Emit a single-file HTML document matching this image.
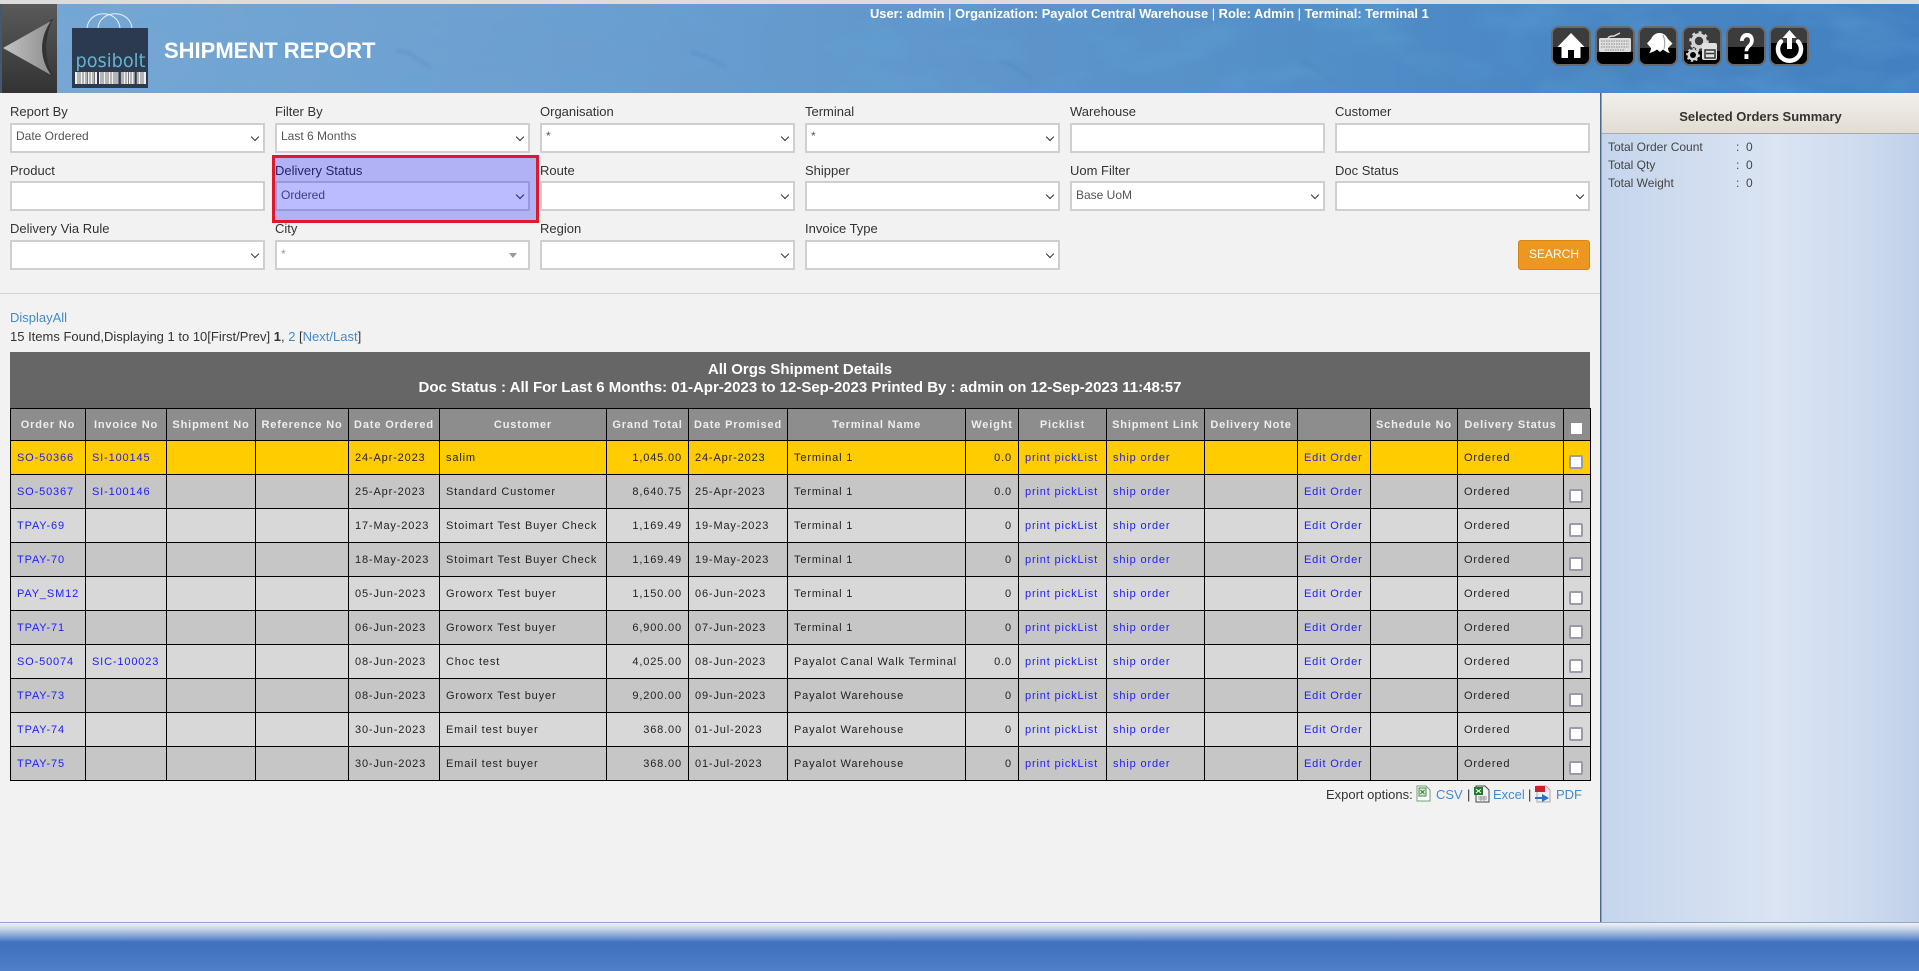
<!DOCTYPE html>
<html><head><meta charset="utf-8"><title>Shipment Report</title>
<style>
*{box-sizing:border-box}
html,body{margin:0;padding:0;width:1919px;height:971px;overflow:hidden;background:#f2f2f2;font-family:"Liberation Sans",Arial,sans-serif;color:#333}
.a{position:absolute}
#top{left:0;top:0;width:1919px;height:4px;background:#dcdcdc}
#hdr{left:0;top:4px;width:1919px;height:89px;background:linear-gradient(90deg,#78a8d4 0%,#6c9fd0 30%,#5f96cb 50%,#5590c8 65%,#4a87c4 80%,#4380c1 100%);overflow:hidden}
.lb{position:absolute;font-size:13px;line-height:16px;color:#333;white-space:nowrap}
.in{position:absolute;width:255px;height:30px;background:#fff;border:2px solid #cfcfcf;font-size:12px;color:#555}
.in span{position:absolute;left:4px;top:4px;line-height:16px;white-space:nowrap}
.in.t span{top:3px}
.in i{position:absolute;left:240px;top:9px;width:6px;height:6px;border-right:1.5px solid #333;border-bottom:1.5px solid #333;transform:rotate(45deg)}
#tbl{position:absolute;left:10px;top:408px;border-collapse:collapse;table-layout:fixed;width:1580px;font-size:11px;letter-spacing:.85px;color:#222}
#tbl td,#tbl th{border:1px solid #000;padding:0 6px;height:34px;white-space:nowrap;overflow:hidden;text-align:left;font-weight:normal}
#tbl th{background:#8d8d8d;color:#eee;font-weight:bold;text-align:center;height:32px;padding:0 2px}
#tbl td.r{text-align:right}
#tbl tr.y td{background:#ffcc00}
#tbl tr.o td{background:#c6c6c6}
#tbl tr.e td{background:#d8d8d8}
#tbl a{color:#2020f5;text-decoration:none}
#tbl td.c{padding:0}
.cb{display:block;width:14px;height:14px;margin:0 auto;background:#fff;border:2px solid #9a9aa8;border-radius:2px;position:relative;top:4px;left:-1px}
.lk{color:#428bca;text-decoration:none}
</style></head><body>
<div class="a" id="top"></div>
<div class="a" id="hdr">
<svg class="a" style="left:0;top:0" width="1919" height="89" viewBox="0 0 1919 89">
<defs><filter id="tx" x="0" y="0" width="100%" height="100%"><feTurbulence type="fractalNoise" baseFrequency="0.012 0.03" numOctaves="3" seed="7"/><feColorMatrix values="0 0 0 0 0.12  0 0 0 0 0.38  0 0 0 0 0.68  1.6 0 0 0 -0.72"/></filter><filter id="bl"><feGaussianBlur stdDeviation="1.600"/></filter></defs>
<rect width="1919" height="89" filter="url(#tx)" opacity=".55"/>
<g fill="none" stroke="#3f7fb9" stroke-width="3" opacity=".25" filter="url(#bl)"><path d="M396 46l12 3 22 14M690 48l12 3 24 12M1000 58l12 3 20 14M1300 58l10 3 22 16"/></g>
</svg>
</div>
<!-- back -->
<svg class="a" style="left:0;top:4px" width="57" height="89" viewBox="0 0 57 89">
<defs><linearGradient id="bk" x1="0" y1="0" x2="0" y2="1"><stop offset="0" stop-color="#5a5a5a"/><stop offset="1" stop-color="#333"/></linearGradient><linearGradient id="ar" x1="0" y1="0" x2="1" y2="0"><stop offset="0" stop-color="#c4c4c4"/><stop offset="1" stop-color="#8e8e8e"/></linearGradient></defs>
<rect width="57" height="89" fill="url(#bk)"/><rect width="2" height="89" fill="#44596e"/>
<path d="M53 15Q47 26 46 44Q47 62 53 71L50 72Q43 60 42 44Q43 28 50 16Z" fill="#333"/>
<path d="M3 44L51 17Q42 30 42 44Q42 58 51 71Z" fill="url(#ar)"/>
</svg>
<!-- logo -->
<svg class="a" style="left:72px;top:10px" width="77" height="79" viewBox="0 0 77 79">
<g fill="none" stroke="#e6eef6" stroke-width="1"><path d="M15 18C17 -1 46 -1 48 18"/><path d="M26 18C28 -1 58 -1 60 18"/></g>
<rect y="18" width="76" height="60" fill="#2c3a4f"/>
<text x="3.500" y="57" font-family="'DejaVu Sans',sans-serif" font-size="19" fill="#64b3d0" textLength="70" lengthAdjust="spacingAndGlyphs">posibolt</text>
<rect x="3" y="62" width="71" height="12" fill="#f0f0f0"/>
<path d="M6 62v12M8 62v12M11 62v12M14 62v12M15.500 62v12M18 62v12M21 62v12M22.500 62v12M29 62v12M31 62v12M34 62v12M36 62v12M39 62v12M42 62v12M44 62v12M46 62v12M49 62v12M51 62v12M54 62v12M56.500 62v12M59 62v12M62 62v12M66 62v12M69 62v12M71 62v12" stroke="#777" stroke-width="1"/>
<path d="M26 62v12M47.700 62v12M63.800 62v12" stroke="#2c3a4f" stroke-width="2"/>
</svg>
<div class="a" style="left:164px;top:38px;font-size:22px;line-height:26px;font-weight:bold;color:#fff;white-space:nowrap">SHIPMENT REPORT</div>
<div class="a" style="left:870px;top:6px;font-size:12.9px;line-height:16px;font-weight:bold;color:#fff;white-space:nowrap">User: admin <span style="font-weight:normal">|</span> Organization: Payalot Central Warehouse <span style="font-weight:normal">|</span> Role: Admin <span style="font-weight:normal">|</span> Terminal: Terminal 1</div>
<!-- icon buttons -->
<svg class="a" style="left:1551px;top:26px" width="260" height="41" viewBox="0 0 260 41">
<defs>
<g id="btn"><rect x="1" y="1" width="38" height="38" rx="7" fill="#000" stroke="#6a6a6a" stroke-width="2"/></g>
<g id="gear"><circle r="5" fill="none" stroke="#d4d4d4" stroke-width="3"/><circle r="7" fill="none" stroke="#d4d4d4" stroke-width="2.200" stroke-dasharray="2.500 2.900"/></g>
</defs>
<use href="#btn" x="0"/><use href="#btn" x="44"/><use href="#btn" x="87"/><use href="#btn" x="131"/><use href="#btn" x="175"/><use href="#btn" x="218"/>
<path d="M2 21V8a6 6 0 0 1 6-6H32a6 6 0 0 1 6 6V21Z" fill="#3c3c3c"/>
<path transform="translate(44 0)" d="M2 26V8a6 6 0 0 1 6-6H32a6 6 0 0 1 6 6V26Z" fill="#3c3c3c"/>
<path transform="translate(87 0)" d="M2 22V8a6 6 0 0 1 6-6H32a6 6 0 0 1 6 6V22Z" fill="#3c3c3c"/>
<path transform="translate(131 0)" d="M2 25V8a6 6 0 0 1 6-6H32a6 6 0 0 1 6 6V25Z" fill="#3c3c3c"/>
<path transform="translate(175 0)" d="M2 21V8a6 6 0 0 1 6-6H32a6 6 0 0 1 6 6V21Z" fill="#3c3c3c"/>
<path transform="translate(218 0)" d="M2 17V8a6 6 0 0 1 6-6H32a6 6 0 0 1 6 6V17Z" fill="#3c3c3c"/>
<!-- home -->
<path d="M20 7L33.500 21H29.500V32H23V24H17V32H10.500V21H6.500Z" fill="#fff"/>
<!-- keyboard -->
<g transform="translate(44 0)"><path d="M13 12Q14 10 19 10L25 7" fill="none" stroke="#ddd" stroke-width="1.500"/><rect x="4" y="12" width="32" height="14" rx="1.500" fill="#ddd"/>
<path d="M6 15h28M6 18h28M6 21h28M10 24h20" stroke="#8a8a8a" stroke-width="1" stroke-dasharray="1.500 1"/></g>
<!-- third -->
<g transform="translate(87 0)"><path d="M21.500 7C26 7 28.500 10 30 13L34.500 17.500L30 22C30 24 31 26 32 27C29 26.500 27 25 25 23.500L22 26L19 23.500C17 25 14 26.500 11 27C12 26 13 24 13 22L9 17.500L13 13C14.500 10 17 7 21.500 7Z" fill="#fff"/><path d="M25 9Q28 16 26 23" stroke="#999" stroke-width="1" fill="none"/></g>
<!-- gears + floppy -->
<g transform="translate(131 0)"><use href="#gear" transform="translate(17 15) scale(1.200)"/><use href="#gear" transform="translate(11 29) scale(.85)"/><rect x="20" y="17" width="15" height="17" rx="2" fill="#e0e0e0"/><rect x="23" y="24" width="10" height="8" fill="none" stroke="#333" stroke-width="1.500"/><path d="M24 27.500h8" stroke="#333" stroke-width="1.500"/></g>
<!-- question -->
<text transform="translate(196 33) scale(.74 1)" text-anchor="middle" font-family="'Liberation Sans',sans-serif" font-weight="bold" font-size="37" fill="#fff">?</text>
<!-- power -->
<g transform="translate(218 0)"><path d="M12 15.500A11.500 11.500 0 1 0 29 15.500" fill="none" stroke="#fff" stroke-width="4.500" stroke-linecap="round"/><path d="M20.500 4L27.500 12H23V23H18V12H13.500Z" fill="#fff"/></g>
</svg>
<!-- form -->
<div class="lb" style="left:10px;top:104px">Report By</div>
<div class="lb" style="left:275px;top:104px">Filter By</div>
<div class="lb" style="left:540px;top:104px">Organisation</div>
<div class="lb" style="left:805px;top:104px">Terminal</div>
<div class="lb" style="left:1070px;top:104px">Warehouse</div>
<div class="lb" style="left:1335px;top:104px">Customer</div>
<div class="in t" style="left:10px;top:123px"><span>Date Ordered</span><i></i></div>
<div class="in t" style="left:275px;top:123px"><span>Last 6 Months</span><i></i></div>
<div class="in t" style="left:540px;top:123px"><span>*</span><i></i></div>
<div class="in t" style="left:805px;top:123px"><span>*</span><i></i></div>
<div class="in" style="left:1070px;top:123px"></div>
<div class="in" style="left:1335px;top:123px"></div>
<div class="lb" style="left:10px;top:163px">Product</div>
<div class="lb" style="left:275px;top:163px">Delivery Status</div>
<div class="lb" style="left:540px;top:163px">Route</div>
<div class="lb" style="left:805px;top:163px">Shipper</div>
<div class="lb" style="left:1070px;top:163px">Uom Filter</div>
<div class="lb" style="left:1335px;top:163px">Doc Status</div>
<div class="in" style="left:10px;top:181px"></div>
<div class="in" style="left:275px;top:181px"><span>Ordered</span><i></i></div>
<div class="in" style="left:540px;top:181px"><i></i></div>
<div class="in" style="left:805px;top:181px"><i></i></div>
<div class="in" style="left:1070px;top:181px"><span>Base UoM</span><i></i></div>
<div class="in" style="left:1335px;top:181px"><i></i></div>
<div class="lb" style="left:10px;top:221px">Delivery Via Rule</div>
<div class="lb" style="left:275px;top:221px">City</div>
<div class="lb" style="left:540px;top:221px">Region</div>
<div class="lb" style="left:805px;top:221px">Invoice Type</div>
<div class="in" style="left:10px;top:240px"><i></i></div>
<div class="in" style="left:275px;top:240px;color:#999"><span>*</span><b class="a" style="left:232px;top:11px;width:0;height:0;border-left:4px solid transparent;border-right:4px solid transparent;border-top:5px solid #999"></b></div>
<div class="in" style="left:540px;top:240px"><i></i></div>
<div class="in" style="left:805px;top:240px"><i></i></div>
<div class="a" style="left:1518px;top:240px;width:72px;height:30px;background:#ec971f;border:1px solid #d58512;border-radius:3px;color:#fff;font-size:12px;line-height:26px;text-align:center">SEARCH</div>
<!-- highlight -->
<div class="a" style="left:272px;top:155px;width:267px;height:68px;border:3px solid #e0182d;background:rgba(0,0,255,.267)"></div>
<div class="a" style="left:0;top:293px;width:1600px;height:1px;background:#d4d4d4"></div>
<!-- paging -->
<div class="a" style="left:10px;top:310px;font-size:13px;line-height:16px;white-space:nowrap"><a class="lk">DisplayAll</a></div>
<div class="a" style="left:10px;top:329px;font-size:13px;line-height:16px;white-space:nowrap;color:#333">15 Items Found,Displaying 1 to 10[First/Prev] <b>1</b>, <a class="lk">2</a> [<a class="lk">Next/Last</a>]</div>
<!-- table -->
<div class="a" style="left:10px;top:352px;width:1580px;height:57px;background:#666;color:#fff;font-weight:bold;font-size:15px;line-height:18px;text-align:center;padding-top:9px;border-bottom:1px solid #000">All Orgs Shipment Details<br>Doc Status : All For Last 6 Months: 01-Apr-2023 to 12-Sep-2023 Printed By : admin on 12-Sep-2023 11:48:57</div>
<table id="tbl"><colgroup><col style="width:75px"><col style="width:81px"><col style="width:89px"><col style="width:93px"><col style="width:91px"><col style="width:167px"><col style="width:82px"><col style="width:99px"><col style="width:178px"><col style="width:53px"><col style="width:88px"><col style="width:98px"><col style="width:93px"><col style="width:73px"><col style="width:87px"><col style="width:106px"><col style="width:27px"></colgroup>
<tr><th>Order No</th><th>Invoice No</th><th>Shipment No</th><th>Reference No</th><th>Date Ordered</th><th>Customer</th><th>Grand Total</th><th>Date Promised</th><th>Terminal Name</th><th>Weight</th><th>Picklist</th><th>Shipment Link</th><th>Delivery Note</th><th></th><th>Schedule No</th><th>Delivery Status</th><th class="c"><span class="cb" style="width:11px;height:11px;border:0;border-radius:0;top:4px"></span></th></tr>
<tr class="y"><td><a>SO-50366</a></td><td><a>SI-100145</a></td><td></td><td></td><td>24-Apr-2023</td><td>salim</td><td class="r">1,045.00</td><td>24-Apr-2023</td><td>Terminal 1</td><td class="r">0.0</td><td><a>print pickList</a></td><td><a>ship order</a></td><td></td><td><a>Edit Order</a></td><td></td><td>Ordered</td><td class="c"><span class="cb"></span></td></tr>
<tr class="o"><td><a>SO-50367</a></td><td><a>SI-100146</a></td><td></td><td></td><td>25-Apr-2023</td><td>Standard Customer</td><td class="r">8,640.75</td><td>25-Apr-2023</td><td>Terminal 1</td><td class="r">0.0</td><td><a>print pickList</a></td><td><a>ship order</a></td><td></td><td><a>Edit Order</a></td><td></td><td>Ordered</td><td class="c"><span class="cb"></span></td></tr>
<tr class="e"><td><a>TPAY-69</a></td><td></td><td></td><td></td><td>17-May-2023</td><td>Stoimart Test Buyer Check</td><td class="r">1,169.49</td><td>19-May-2023</td><td>Terminal 1</td><td class="r">0</td><td><a>print pickList</a></td><td><a>ship order</a></td><td></td><td><a>Edit Order</a></td><td></td><td>Ordered</td><td class="c"><span class="cb"></span></td></tr>
<tr class="o"><td><a>TPAY-70</a></td><td></td><td></td><td></td><td>18-May-2023</td><td>Stoimart Test Buyer Check</td><td class="r">1,169.49</td><td>19-May-2023</td><td>Terminal 1</td><td class="r">0</td><td><a>print pickList</a></td><td><a>ship order</a></td><td></td><td><a>Edit Order</a></td><td></td><td>Ordered</td><td class="c"><span class="cb"></span></td></tr>
<tr class="e"><td><a>PAY_SM12</a></td><td></td><td></td><td></td><td>05-Jun-2023</td><td>Groworx Test buyer</td><td class="r">1,150.00</td><td>06-Jun-2023</td><td>Terminal 1</td><td class="r">0</td><td><a>print pickList</a></td><td><a>ship order</a></td><td></td><td><a>Edit Order</a></td><td></td><td>Ordered</td><td class="c"><span class="cb"></span></td></tr>
<tr class="o"><td><a>TPAY-71</a></td><td></td><td></td><td></td><td>06-Jun-2023</td><td>Groworx Test buyer</td><td class="r">6,900.00</td><td>07-Jun-2023</td><td>Terminal 1</td><td class="r">0</td><td><a>print pickList</a></td><td><a>ship order</a></td><td></td><td><a>Edit Order</a></td><td></td><td>Ordered</td><td class="c"><span class="cb"></span></td></tr>
<tr class="e"><td><a>SO-50074</a></td><td><a>SIC-100023</a></td><td></td><td></td><td>08-Jun-2023</td><td>Choc test</td><td class="r">4,025.00</td><td>08-Jun-2023</td><td>Payalot Canal Walk Terminal</td><td class="r">0.0</td><td><a>print pickList</a></td><td><a>ship order</a></td><td></td><td><a>Edit Order</a></td><td></td><td>Ordered</td><td class="c"><span class="cb"></span></td></tr>
<tr class="o"><td><a>TPAY-73</a></td><td></td><td></td><td></td><td>08-Jun-2023</td><td>Groworx Test buyer</td><td class="r">9,200.00</td><td>09-Jun-2023</td><td>Payalot Warehouse</td><td class="r">0</td><td><a>print pickList</a></td><td><a>ship order</a></td><td></td><td><a>Edit Order</a></td><td></td><td>Ordered</td><td class="c"><span class="cb"></span></td></tr>
<tr class="e"><td><a>TPAY-74</a></td><td></td><td></td><td></td><td>30-Jun-2023</td><td>Email test buyer</td><td class="r">368.00</td><td>01-Jul-2023</td><td>Payalot Warehouse</td><td class="r">0</td><td><a>print pickList</a></td><td><a>ship order</a></td><td></td><td><a>Edit Order</a></td><td></td><td>Ordered</td><td class="c"><span class="cb"></span></td></tr>
<tr class="o"><td><a>TPAY-75</a></td><td></td><td></td><td></td><td>30-Jun-2023</td><td>Email test buyer</td><td class="r">368.00</td><td>01-Jul-2023</td><td>Payalot Warehouse</td><td class="r">0</td><td><a>print pickList</a></td><td><a>ship order</a></td><td></td><td><a>Edit Order</a></td><td></td><td>Ordered</td><td class="c"><span class="cb"></span></td></tr>
</table>
<!-- export -->
<div class="a" style="left:1326px;top:787px;font-size:13px;line-height:16px;color:#333;white-space:nowrap">Export options:</div>
<svg class="a" style="left:1416px;top:785px" width="18" height="18" viewBox="0 0 18 18"><path d="M1 1H10L14 5V16H1Z" fill="#fff" stroke="#7a9a7a"/><rect x="3" y="3" width="7" height="8" fill="#dfeedd" stroke="#3c8c3c"/><path d="M4.500 5l4 4M8.500 5l-4 4" stroke="#2d7a2d"/></svg>
<div class="a lk" style="left:1436px;top:787px;font-size:13px;line-height:16px">CSV</div>
<div class="a" style="left:1467px;top:787px;font-size:13px;line-height:16px">|</div>
<svg class="a" style="left:1473px;top:785px" width="18" height="18" viewBox="0 0 18 18"><path d="M3 1H12L16 5V17H3Z" fill="#f4f4f4" stroke="#444"/><rect x="1" y="2" width="9" height="8" fill="#1f7a2e"/><path d="M3 4l5 4M8 4l-5 4" stroke="#fff"/><path d="M5 12h9M5 14h9M8 11v5M11 11v5" stroke="#999"/></svg>
<div class="a lk" style="left:1493px;top:787px;font-size:13px;line-height:16px">Excel</div>
<div class="a" style="left:1528px;top:787px;font-size:13px;line-height:16px">|</div>
<svg class="a" style="left:1534px;top:785px" width="18" height="18" viewBox="0 0 18 18"><path d="M3 1H12L16 5V17H3Z" fill="#eee" stroke="#aaa"/><rect x="1" y="1" width="10" height="6" fill="#d0202a"/><path d="M1 12H8V9L15 13L8 17V14H1Z" fill="#2e6fc0"/></svg>
<div class="a lk" style="left:1556px;top:787px;font-size:13px;line-height:16px">PDF</div>
<!-- right panel -->
<div class="a" style="left:1600px;top:93px;width:1px;height:829px;background:#4a6a8c"></div>
<div class="a" style="left:1601px;top:93px;width:1px;height:829px;background:#8aa3c0"></div>
<div class="a" style="left:1602px;top:133px;width:317px;height:789px;background:linear-gradient(90deg,#c5d5ec 0%,#cfdcef 25%,#dae4f3 55%,#cfdcef 80%,#c0d0ea 100%)"></div>
<div class="a" style="left:1602px;top:93px;width:317px;height:41px;background:linear-gradient(180deg,#f2f0ec,#e2dcd2);border-bottom:1px solid #aaa;font-size:13px;font-weight:bold;line-height:47px;text-align:center;color:#333">Selected Orders Summary</div>
<div class="a" style="left:1608px;top:139px;font-size:12px;line-height:16px;color:#444">Total Order Count</div><div class="a" style="left:1736px;top:139px;font-size:12px;line-height:16px;color:#444">:</div><div class="a" style="left:1746px;top:139px;font-size:12px;line-height:16px;color:#444">0</div>
<div class="a" style="left:1608px;top:157px;font-size:12px;line-height:16px;color:#444">Total Qty</div><div class="a" style="left:1736px;top:157px;font-size:12px;line-height:16px;color:#444">:</div><div class="a" style="left:1746px;top:157px;font-size:12px;line-height:16px;color:#444">0</div>
<div class="a" style="left:1608px;top:175px;font-size:12px;line-height:16px;color:#444">Total Weight</div><div class="a" style="left:1736px;top:175px;font-size:12px;line-height:16px;color:#444">:</div><div class="a" style="left:1746px;top:175px;font-size:12px;line-height:16px;color:#444">0</div>
<!-- footer -->
<div class="a" style="left:0;top:922px;width:1919px;height:1px;background:#8aa7cc"></div>
<div class="a" style="left:0;top:923px;width:1919px;height:48px;background:linear-gradient(180deg,#f0f3f6 0px,#c6d4e6 6px,#6f95cd 15px,#3f73c1 19px,#4072c0 24px,#4f7fc8 48px)"></div>
</body></html>
